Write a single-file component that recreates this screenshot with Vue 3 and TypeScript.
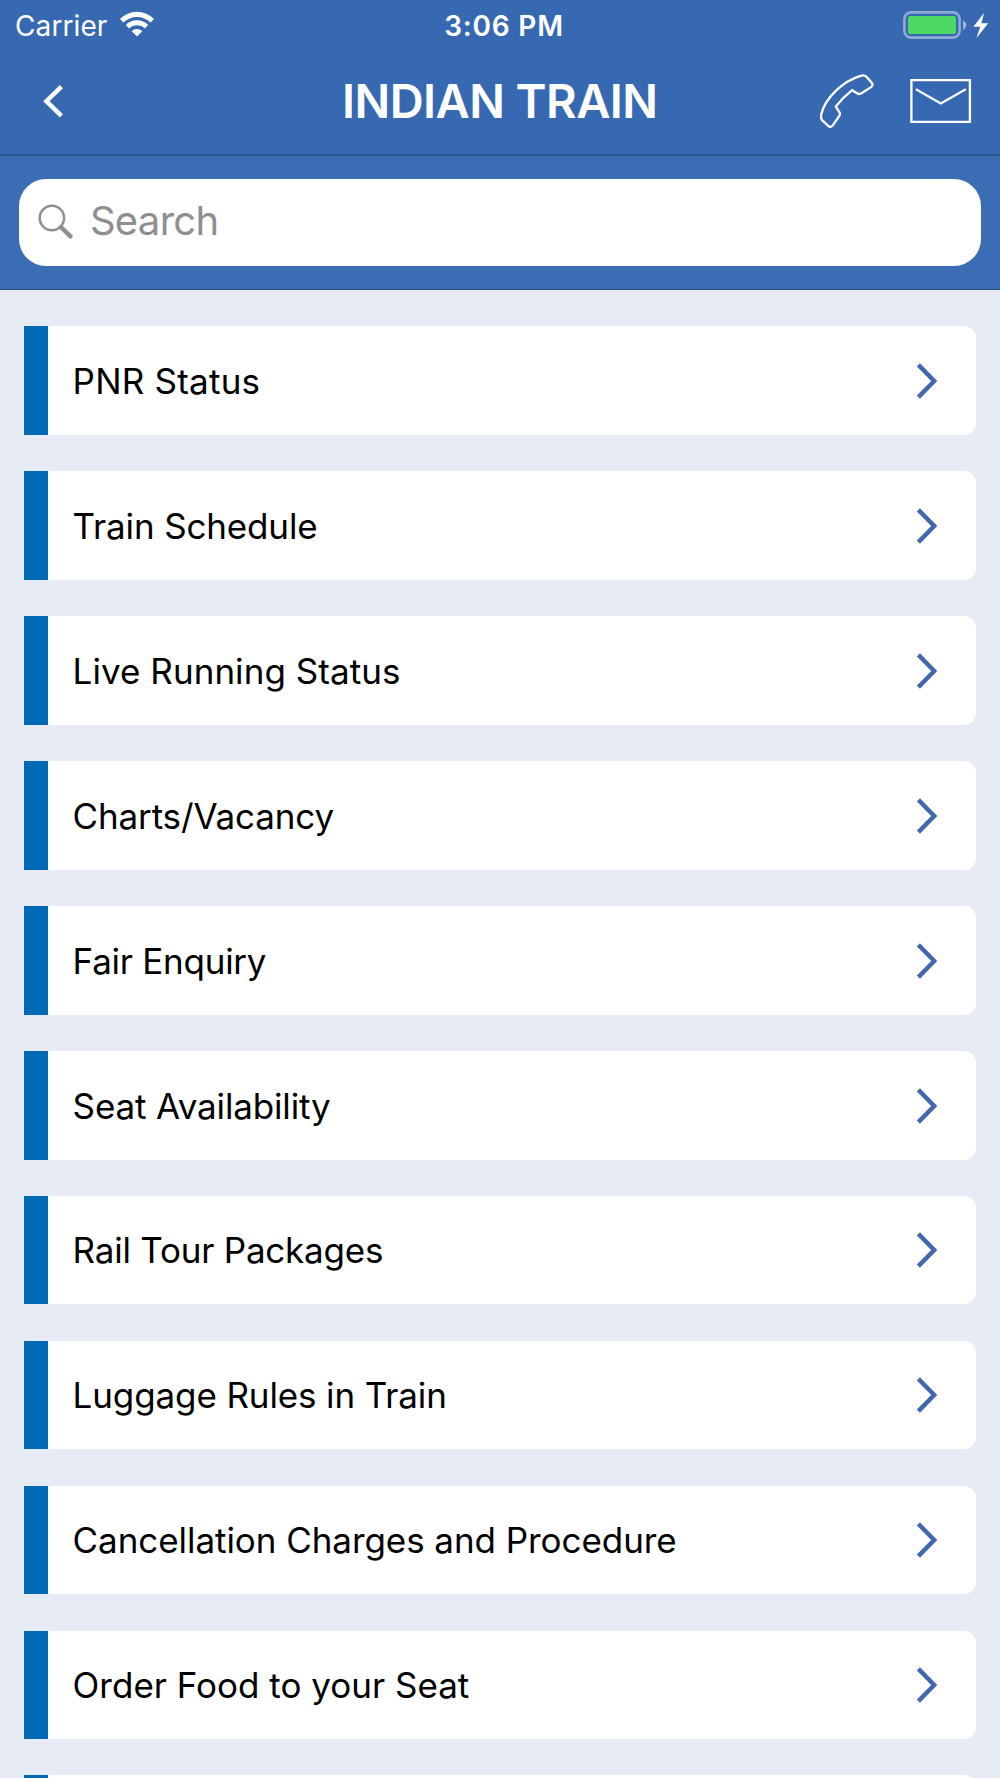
<script setup lang="ts">
interface MenuItem {
  label: string
  tracking: number
}

const items: MenuItem[] = [
  { label: 'PNR Status', tracking: 0.22 },
  { label: 'Train Schedule', tracking: -0.15 },
  { label: 'Live Running Status', tracking: 0.05 },
  { label: 'Charts/Vacancy', tracking: -0.15 },
  { label: 'Fair Enquiry', tracking: -0.25 },
  { label: 'Seat Availability', tracking: -0.14 },
  { label: 'Rail Tour Packages', tracking: -0.22 },
  { label: 'Luggage Rules in Train', tracking: -0.12 },
  { label: 'Cancellation Charges and Procedure', tracking: -0.06 },
  { label: 'Order Food to your Seat', tracking: 0 },
  { label: '', tracking: 0 },
]
</script>

<template>
  <div class="screen">
    <header class="top">
      <div class="status">
        <div class="side">
          <span class="carrier">Carrier</span>
          <svg class="wifi" width="36" height="26" viewBox="0 0 36 26">
            <path d="M1 7.9A24 24 0 0 1 35 7.9L31.6 11.6A19.2 19.2 0 0 0 4.4 11.6Z" />
            <path d="M6.8 14A15.8 15.8 0 0 1 29.2 14L25.8 17.6A11 11 0 0 0 10.2 17.6Z" />
            <path d="M12.7 20.2A7.6 7.6 0 0 1 23.3 20.2L18 25.4Z" />
          </svg>
        </div>
        <span class="time">3:06 PM</span>
        <div class="side end">
          <svg class="battery" width="88" height="30" viewBox="0 0 88 30">
            <rect x="1.4" y="2.4" width="55.2" height="25.2" rx="6.5" class="shell" />
            <rect x="5" y="6" width="48" height="18" rx="2.6" class="charge" />
            <path d="M60 10.2Q63.4 12.3 63.4 15.1T60 20Z" class="nub" />
            <path d="M81.3 2.7L70.3 16.7H77.3L73.4 28.2L85.2 13.2H78.2Z" class="bolt" />
          </svg>
        </div>
      </div>
      <nav class="nav">
        <svg class="back" width="24" height="36" viewBox="0 0 24 36">
          <path d="M20.4 3.6L5.4 18.2L20.4 32.8" />
        </svg>
        <h1>INDIAN TRAIN</h1>
        <div class="actions">
          <svg class="phone" width="56" height="56" viewBox="0 0 56 56">
            <path d="M40.5 2.8Q44 1.5 46.3 3.6L51.7 9.8Q53.6 12.2 51 14.1L41.5 20.3Q39.2 21.6 37 20.2L32.2 17.2Q23 24.4 15.8 33.5L19.5 39.3Q20.4 41 19.3 43L12.8 52.4Q10.8 55 8.3 53L2.3 47.4Q0.4 45.2 1.2 41.5C5 25 23 8 40.5 2.8Z" />
          </svg>
          <svg width="62" height="46" viewBox="0 0 62 46">
            <path d="M1.4 2.2H59.9V43.9H1.4Z M5.9 11.2L30.8 25.4L55.8 11.2" />
          </svg>
        </div>
      </nav>
    </header>

    <div class="search-bar">
      <div class="field">
        <svg width="36" height="36" viewBox="0 0 36 36">
          <circle cx="14.9" cy="14" r="12.2" />
          <path d="M23.9 23L33.4 32.4" />
        </svg>
        <span>Search</span>
      </div>
    </div>

    <main class="list">
      <div v-for="(item, i) in items" :key="i" class="card">
        <span class="label" :style="{ letterSpacing: item.tracking + 'px' }">{{ item.label }}</span>
        <svg width="24" height="40" viewBox="0 0 24 40">
          <path d="M3.4 3.9L19.2 20L3.4 36.1" />
        </svg>
      </div>
    </main>
  </div>
</template>

<style>
body {
  margin: 0;
  overflow: hidden;
}
</style>

<style scoped>
.screen {
  width: 1000px;
  height: 1778px;
  overflow: hidden;
  display: flex;
  flex-direction: column;
  background: #e7ebf6;
  font-family: Inter, "Liberation Sans", sans-serif;
  box-sizing: border-box;
}

svg {
  display: block;
  flex: none;
  fill: none;
}

.top {
  flex: none;
  box-sizing: border-box;
  height: 156px;
  background: #3669b1;
  border-bottom: 2px solid #2e568f;
  color: #fff;
}

.status {
  height: 50px;
  display: flex;
  align-items: center;
  font-size: 28px;
  line-height: 34px;
}

.side {
  flex: 1;
  display: flex;
  align-items: center;
  padding-left: 15px;
}

.carrier {
  padding-top: 1px;
  letter-spacing: 0.1px;
}

.wifi {
  margin: -2px 0 0 12px;
  fill: #fff;
}

.time {
  padding: 1px 0 0 6px;
  font-weight: 600;
  letter-spacing: 0.8px;
}

.side.end {
  justify-content: flex-end;
  padding: 0 9px 0 4px;
}

.battery {
  margin-top: -1px;
}

.shell {
  stroke: rgba(255, 255, 255, 0.45);
  stroke-width: 2.6;
}

.charge {
  fill: #4cd964;
}

.nub {
  fill: rgba(255, 255, 255, 0.5);
}

.bolt {
  fill: #fff;
}

.nav {
  height: 102px;
  display: flex;
  align-items: center;
}

.back {
  margin-left: 40.5px;
  stroke: #fff;
  stroke-width: 4.4;
}

h1 {
  flex: 1;
  margin: 0 0 0 115px;
  text-align: center;
  font-size: 47px;
  line-height: 56px;
  font-weight: 600;
  letter-spacing: -0.55px;
}

.actions {
  display: flex;
  align-items: center;
  gap: 34px;
  margin-right: 28px;
  stroke: #fff;
  stroke-width: 2.3;
}

.phone {
  margin-top: -1px;
}

.search-bar {
  flex: none;
  box-sizing: border-box;
  height: 134px;
  padding: 22.7px 19.4px 0;
  background: #3b6db4;
  border-bottom: 1px solid #2c4c80;
}

.field {
  height: 87px;
  border-radius: 27px;
  background: #fff;
  display: flex;
  align-items: center;
  padding-left: 18px;
  color: #8e8e93;
  font-size: 40px;
  line-height: 48px;
  letter-spacing: -0.7px;
}

.field span {
  padding-bottom: 2px;
}

.field svg {
  margin-right: 16.5px;
  stroke: #8e8e93;
  stroke-width: 2.5;
}

.field path {
  stroke-width: 4.4;
  stroke-linecap: round;
}

.list {
  flex: 1;
  min-height: 0;
  overflow: hidden;
  display: flex;
  flex-direction: column;
  gap: 36.32px;
  padding: 36.4px 24.4px 0 24px;
}

.card {
  flex: none;
  box-sizing: border-box;
  height: 108.6px;
  display: flex;
  align-items: center;
  justify-content: space-between;
  padding: 0.6px 36.6px 0 24.6px;
  border-left: 24px solid #0069b6;
  border-radius: 0 12px 12px 0;
  background: #fff;
}

.label {
  font-size: 35px;
  line-height: 42px;
  color: #000;
  white-space: nowrap;
}

.card svg {
  stroke: #4168ae;
  stroke-width: 4.4;
}
</style>
